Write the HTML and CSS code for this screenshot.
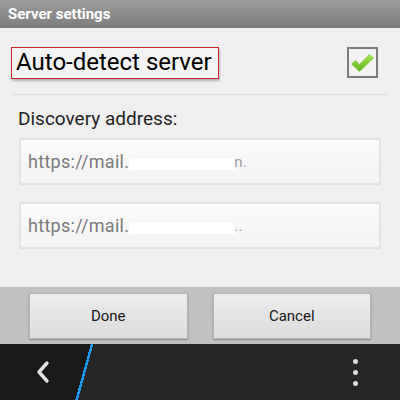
FILE: index.html
```html
<!DOCTYPE html>
<html>
<head>
<meta charset="utf-8">
<link rel="stylesheet" href="styles.css">
</head>
<body>
<div class="screen">
  <header class="titlebar">Server settings</header>
  <main class="content">
    <div class="toggle-row">
      <div class="auto-label">Auto-detect server</div>
      <div class="checkbox">
        <svg width="27" height="27" viewBox="0 0 27 27">
          <defs>
            <linearGradient id="g" x1="0" y1="0" x2="0" y2="1">
              <stop offset="0" stop-color="#a8e64c"/>
              <stop offset="1" stop-color="#5cb01a"/>
            </linearGradient>
          </defs>
          <path d="M2.5 15 L6.5 11.5 L10.5 15.5 L20.5 5.5 L24.5 9 L10.5 22.5 Z" fill="url(#g)" stroke="#6fbf2a" stroke-width="0.6" stroke-linejoin="round"/>
        </svg>
      </div>
    </div>
    <div class="divider"></div>
    <div class="field-label">Discovery address:</div>
    <div class="input"><span class="val">https://mail.</span><span class="redact"></span><span class="tail">n.</span></div>
    <div class="input"><span class="val">https://mail.</span><span class="redact"></span><span class="tail">..</span></div>
  </main>
  <div class="actions">
    <button class="btn">Done</button>
    <button class="btn">Cancel</button>
  </div>
  <nav class="navbar">
    <div class="back">
      <svg width="16" height="24" viewBox="0 0 16 24"><path d="M12 3 L4 12 L12 21" fill="none" stroke="#e0e0e0" stroke-width="3.4" stroke-linecap="round" stroke-linejoin="round"/></svg>
    </div>
    <div class="more">
      <span class="dot"></span><span class="dot"></span><span class="dot"></span>
    </div>
  </nav>
</div>
</body>
</html>
```
FILE: styles.css
```css
* { box-sizing: border-box; }
html, body { margin: 0; padding: 0; }
body { width: 400px; height: 400px; overflow: hidden; font-family: Roboto, "Liberation Sans", sans-serif; }
.screen { width: 400px; height: 400px; display: flex; flex-direction: column; background: #efefef; }
.titlebar {
  height: 28px; flex: none;
  background: linear-gradient(#9c9c9c, #7d7d7d);
  color: #fff; font-weight: bold; font-size: 15px;
  padding: 5px 0 0 8px; line-height: 18px;
}
.content { flex: 1; padding: 19px 19px 0 11px; }
.toggle-row { display: flex; justify-content: space-between; align-items: flex-start; height: 32px; }
.auto-label {
  width: 208px; height: 32px;
  border: 1px solid #c8262a;
  box-shadow: 1px 2px 2px rgba(0,0,0,0.25);
  font-size: 24px; color: #000; line-height: 29px; padding-left: 4px;
  background: #f3f3f3; white-space: nowrap;
}
.checkbox {
  width: 31px; height: 31px; margin-right: 3px;
  border: 2px solid #7c7c7c; background: #f2f2f2;
  display: flex; align-items: center; justify-content: center;
}
.divider { height: 1px; background: #dcdcdc; margin: 15px -7px 0 1px; }
.field-label { font-size: 19px; color: #1e1e1e; margin: 12px 0 0 7px; line-height: 24px; }
.input {
  margin: 7px 0 0 8px; height: 47px;
  border: 2px solid #e1e1e1;
  background: linear-gradient(#fafafa, #f3f3f3);
  display: flex; align-items: center; padding-left: 7px;
  font-size: 18px; color: #7b7b7b; letter-spacing: 0.3px;
}
.input + .input { margin-top: 17px; }
.redact { display: inline-block; width: 105px; height: 11px; background: #fff; margin-top: 6px; }
.tail { color: #a0a0a0; font-size: 15px; }
.actions {
  height: 57px; flex: none; background: #c0c0c0;
  display: flex; gap: 25px; padding: 6px 29px 0 29px;
}
.btn {
  width: 159px; height: 46px;
  border: 1px solid #b3b3b3; border-radius: 1px;
  background: linear-gradient(#ececec, #dcdcdc);
  box-shadow: 0 1px 2px rgba(0,0,0,0.3);
  font-family: Roboto, "Liberation Sans", sans-serif;
  font-size: 15px; color: #1a1a1a; padding: 0;
}
.navbar {
  height: 56px; flex: none;
  background: linear-gradient(105.5deg, #191919 0, #191919 87.5px, #1a9bf2 87.5px, #1a9bf2 90px, #262626 90px);
  display: flex; justify-content: space-between; align-items: center;
}
.back { width: 80px; display: flex; justify-content: center; margin-left: 3px; }
.more { display: flex; flex-direction: column; align-items: center; gap: 6px; margin-right: 42px; }
.dot { width: 5px; height: 5px; border-radius: 50%; background: #dcdcdc; }
```
